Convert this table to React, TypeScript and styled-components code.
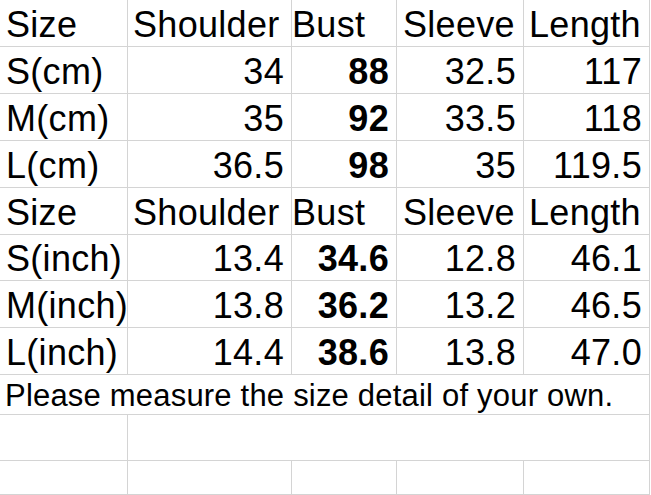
import React from "react";
import styled, { createGlobalStyle } from "styled-components";

const Global = createGlobalStyle`
  html, body { margin: 0; padding: 0; background: #ffffff; }
  body { font-family: "Liberation Sans", Arial, sans-serif; }
`;

const Sheet = styled.div`
  display: grid;
  grid-template-columns: 127px 163px 104px 126px 125px;
  grid-template-rows: 46px 46px 46px 46px 46px 45px 46px 46px 39px 45px 33px;
  gap: 1px;
  width: max-content;
  padding: 0 1px 1px 0;
  background: #d4d4d4;
`;

const Cell = styled.div<{ $align?: "left" | "right"; $bold?: boolean; $pad?: number; $span?: number; $size?: number; $track?: number }>`
  background: #ffffff;
  display: flex;
  align-items: flex-end;
  justify-content: ${(p) => (p.$align === "right" ? "flex-end" : "flex-start")};
  padding: 0 ${(p) => (p.$align === "right" ? 7 : 0)}px 0 ${(p) => (p.$align === "right" ? 0 : p.$pad ?? 6)}px;
  grid-column: span ${(p) => p.$span ?? 1};
  font-family: "Liberation Sans", Arial, sans-serif;
  font-size: ${(p) => p.$size ?? 36}px;
  letter-spacing: ${(p) => p.$track ?? 0.3}px;
  font-weight: ${(p) => (p.$bold ? 700 : 400)};
  line-height: normal;
  color: #000000;
  white-space: nowrap;
  overflow: visible;
`;

const headerPads = [6, 5, 0, 6, 5];
const headers = ["Size", "Shoulder", "Bust", "Sleeve", "Length"];

const cmRows = [
  ["S(cm)", "34", "88", "32.5", "117"],
  ["M(cm)", "35", "92", "33.5", "118"],
  ["L(cm)", "36.5", "98", "35", "119.5"],
];

const inchRows = [
  ["S(inch)", "13.4", "34.6", "12.8", "46.1"],
  ["M(inch)", "13.8", "36.2", "13.2", "46.5"],
  ["L(inch)", "14.4", "38.6", "13.8", "47.0"],
];

const HeaderRow = () => (
  <>
    {headers.map((h, i) => (
      <Cell key={h} $pad={headerPads[i]}>
        {h}
      </Cell>
    ))}
  </>
);

const DataRow = ({ row }: { row: string[] }) => (
  <>
    {row.map((v, i) =>
      i === 0 ? (
        <Cell key={i}>{v}</Cell>
      ) : (
        <Cell key={i} $align="right" $bold={i === 2}>
          {v}
        </Cell>
      )
    )}
  </>
);

export default function App() {
  return (
    <>
      <Global />
      <Sheet>
        <HeaderRow />
        {cmRows.map((r) => (
          <DataRow key={r[0]} row={r} />
        ))}
        <HeaderRow />
        {inchRows.map((r) => (
          <DataRow key={r[0]} row={r} />
        ))}
        <Cell $span={5} $pad={5} $size={31} $track={0.2}>
          Please measure the size detail of your own.
        </Cell>
        <Cell />
        <Cell $span={4} />
        <Cell />
        <Cell />
        <Cell />
        <Cell />
        <Cell />
      </Sheet>
    </>
  );
}
